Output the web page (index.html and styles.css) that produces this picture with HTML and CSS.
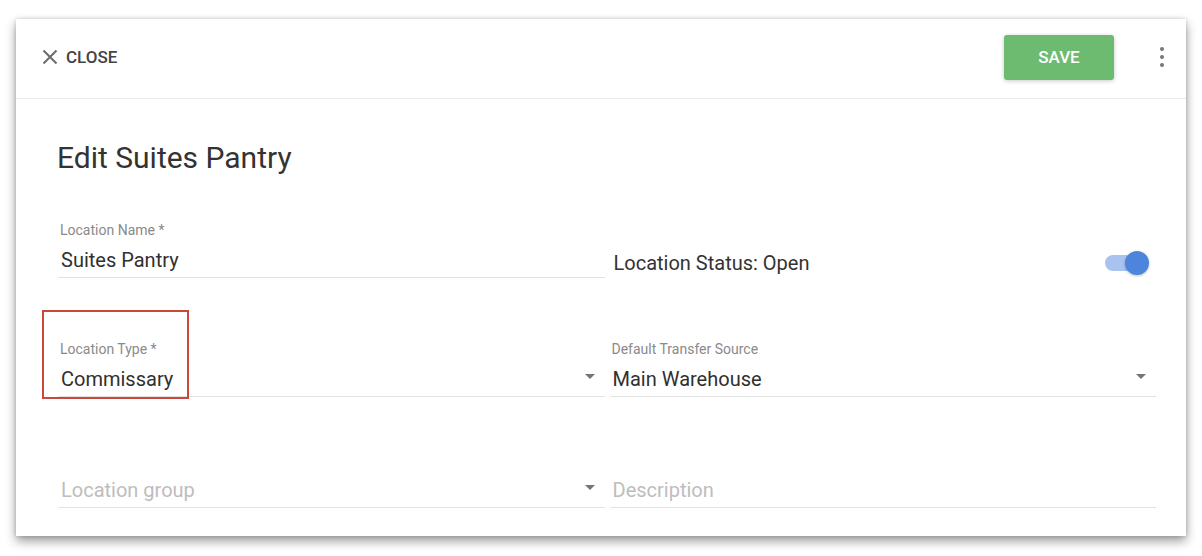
FILE: index.html
```html
<!DOCTYPE html>
<html>
<head>
<meta charset="utf-8">
<link rel="stylesheet" href="styles.css">
</head>
<body>
<div class="card">
  <div class="header">
    <button class="close-btn">
      <svg class="close-icon" viewBox="0 0 16 16" width="16" height="16"><path d="M1.5 1.5L14.5 14.5M14.5 1.5L1.5 14.5" stroke="#6b6b6b" stroke-width="2" fill="none"/></svg>
      <span>CLOSE</span>
    </button>
    <button class="save-btn">SAVE</button>
    <div class="kebab">
      <span class="dot"></span><span class="dot"></span><span class="dot"></span>
    </div>
  </div>
  <div class="body">
    <h1 class="title">Edit Suites Pantry</h1>
    <div class="row row-1">
      <div class="field">
        <div class="label">Location Name *</div>
        <div class="value">Suites Pantry</div>
      </div>
      <div class="status">
        <span class="status-text">Location Status: Open</span>
        <span class="toggle"><span class="track"></span><span class="knob"></span></span>
      </div>
    </div>
    <div class="row row-2">
      <div class="field select highlighted">
        <div class="label">Location Type *</div>
        <div class="value">Commissary</div>
        <svg class="arrow" viewBox="0 0 24 24" width="24" height="24"><path d="M7 10l5 5 5-5z" fill="#757575"/></svg>
        <div class="annotation"></div>
      </div>
      <div class="field select">
        <div class="label">Default Transfer Source</div>
        <div class="value">Main Warehouse</div>
        <svg class="arrow" viewBox="0 0 24 24" width="24" height="24"><path d="M7 10l5 5 5-5z" fill="#757575"/></svg>
      </div>
    </div>
    <div class="row row-3">
      <div class="field select">
        <div class="label"></div>
        <div class="value placeholder">Location group</div>
        <svg class="arrow" viewBox="0 0 24 24" width="24" height="24"><path d="M7 10l5 5 5-5z" fill="#757575"/></svg>
      </div>
      <div class="field">
        <div class="label"></div>
        <div class="value placeholder">Description</div>
      </div>
    </div>
  </div>
</div>
</body>
</html>
```
FILE: styles.css
```css
* { box-sizing: border-box; }
html, body { margin: 0; padding: 0; background: #fff; }
body {
  font-family: Roboto, "Noto Sans", "Liberation Sans", sans-serif;
  color: #333;
  padding: 19px 16px 21px 16px;
}
.card {
  width: 1170px;
  background: #fff;
  box-shadow: 0 5px 10px rgba(0,0,0,0.4), 0 0 4px rgba(0,0,0,0.15);
}
.header {
  height: 80px;
  border-bottom: 1px solid #e9e9e9;
  display: flex;
  align-items: center;
  padding: 0 12px 3px 26px;
}
.close-btn {
  display: flex;
  align-items: center;
  gap: 8px;
  background: none;
  border: none;
  padding: 0;
  font-family: inherit;
  font-size: 17px;
  font-weight: 500;
  color: #444;
  letter-spacing: 0;
}
.close-icon { display: block; }
.save-btn {
  margin-left: auto;
  width: 110px;
  height: 45px;
  border: none;
  border-radius: 3px;
  background: #6dbb70;
  color: #fff;
  font-family: inherit;
  font-size: 17px;
  font-weight: 500;
  box-shadow: 0 1px 4px rgba(0,0,0,0.22);
}
.kebab {
  margin-left: 36px;
  width: 24px;
  height: 24px;
  display: flex;
  flex-direction: column;
  align-items: center;
  justify-content: center;
  gap: 4px;
}
.dot {
  width: 4px;
  height: 4px;
  border-radius: 50%;
  background: #777;
}
.body {
  padding: 0 30px 28px 42px;
}
.title {
  margin: 41px 0 0 -1px;
  font-size: 30px;
  line-height: 36px;
  font-weight: 400;
  color: #333;
}
.row {
  display: grid;
  grid-template-columns: 1fr 1fr;
  column-gap: 5px;
}
.row-1 { margin-top: 46px; }
.row-2 { margin-top: 63px; }
.row-3 { margin-top: 55px; }
.field {
  position: relative;
  border-bottom: 1px solid #e2e2e2;
}
.label {
  height: 16px;
  font-size: 14px;
  line-height: 16px;
  color: #8a8a8a;
  padding-left: 2px;
}
.value {
  margin-top: 8px;
  font-size: 20px;
  line-height: 28px;
  height: 31px;
  padding: 0 0 3px 3px;
  color: #303030;
}
.placeholder { color: #bdbdbd; }
.arrow {
  position: absolute;
  right: 3px;
  bottom: 8px;
}
.annotation {
  position: absolute;
  left: -16px;
  top: -31px;
  width: 147px;
  height: 89px;
  border: 2px solid #c9473b;
}
.status {
  display: flex;
  align-items: center;
  height: 28px;
  margin-top: 27px;
  padding-left: 4px;
}
.status-text {
  font-size: 20px;
  line-height: 28px;
  color: #333;
}
.toggle {
  position: relative;
  margin-left: auto;
  margin-right: 7px;
  width: 44px;
  height: 24px;
}
.track {
  position: absolute;
  left: 0;
  top: 4px;
  width: 36px;
  height: 16px;
  border-radius: 8px;
  background: #a9c3ef;
}
.knob {
  position: absolute;
  right: 0;
  top: 0;
  width: 24px;
  height: 24px;
  border-radius: 50%;
  background: #4d85dc;
  box-shadow: 0 1px 3px rgba(0,0,0,0.25);
}
```
